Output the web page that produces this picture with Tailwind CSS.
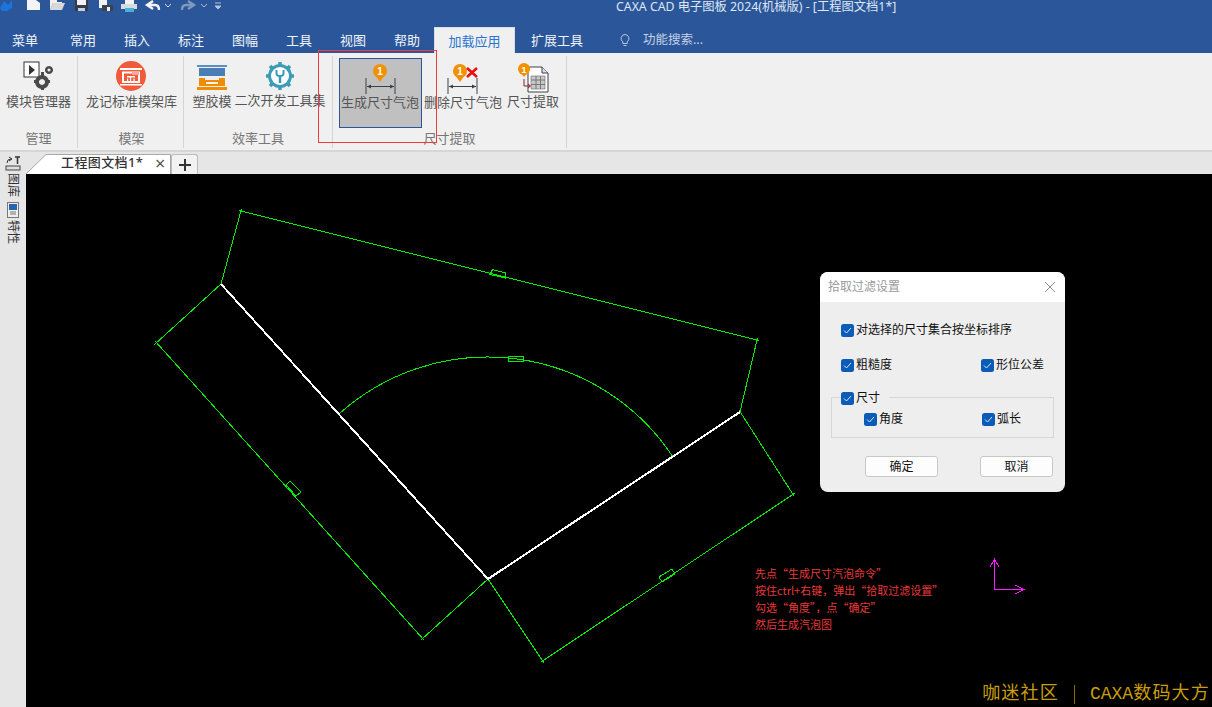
<!DOCTYPE html>
<html lang="zh">
<head>
<meta charset="utf-8">
<script src="https://cdn.jsdelivr.net/npm/@tailwindcss/browser@4"></script>
</head>
<body class="w-[1212px] h-[707px] overflow-hidden bg-black font-['Noto_Sans','Noto_Sans_CJK_SC',sans-serif] text-[13px]">
<div class="w-[1212px] h-[707px] flex flex-col relative">

  <!-- title bar -->
  <header class="h-[27px] bg-[#2b579a] relative flex items-start shrink-0">
    <div class="flex items-start h-[12px] overflow-hidden">
      <svg width="226" height="12" viewBox="0 0 226 12">
        <path d="M0 8 L4 1 L8 5 L12 0 L12 8 L7 11 L2 11Z" fill="#1c73d8"/>
        <path d="M27 0H36L40 3V10H27Z" fill="#f4f4f4"/>
        <path d="M50 10L53 3H65L62 10Z" fill="#d8d8d8"/><path d="M50 10V0H57V2H62V3H53L50 10Z" fill="#f0f0f0"/>
        <path d="M75 0H88V11H75Z" fill="#333c48"/><path d="M77 0H86V5H77Z" fill="#f2f2f2"/><path d="M78 8H85V11H78Z" fill="#ccd"/>
        <path d="M99 0H107V8H99Z" fill="#f2f2f2"/><path d="M102 5H113V11H102Z" fill="#39424e"/><path d="M107 7H110V11H107Z" fill="#eee"/>
        <path d="M125 0H134V4H125Z" fill="#f2f2f2"/><path d="M121 4H137V9H121Z" fill="#d7dbe0"/><path d="M125 8H134V12H125Z" fill="#4bb0d8"/>
        <path d="M153 1L147 5L153 9M147 5H155Q159 5 159 10" fill="none" stroke="#f4f4f4" stroke-width="2.4"/>
        <path d="M165 4L168 7L171 4" fill="none" stroke="#dde" stroke-width="1"/>
        <path d="M188 1L194 5L188 9M194 5H186Q182 5 182 10" fill="none" stroke="#7f98bd" stroke-width="2.4"/>
        <path d="M201 4L204 7L207 4" fill="none" stroke="#aabbd4" stroke-width="1"/>
        <path d="M215 3H221M215 6H221L218 9Z" fill="#b5c3d9" stroke="#b5c3d9" stroke-width="1"/>
      </svg>
    </div>
    <div class="absolute left-[616px] top-[-1px] text-[#dfe6f1] text-[12.3px] leading-[16px] whitespace-nowrap">CAXA CAD 电子图板 2024(机械版) - [工程图文档1*]</div>
  </header>

  <!-- tabs -->
  <nav class="h-[26px] bg-[#2b579a] flex items-center shrink-0 text-[#f1f4f9] pl-[12px] leading-[26px]">
    <span class="w-[58px]">菜单</span>
    <span class="w-[54px]">常用</span>
    <span class="w-[54px]">插入</span>
    <span class="w-[54px]">标注</span>
    <span class="w-[54px]">图幅</span>
    <span class="w-[54px]">工具</span>
    <span class="w-[54px]">视图</span>
    <span class="w-[40px]">帮助</span>
    <span class="w-[81px] h-[26px] bg-[#f0f0f0] text-[#2a74d2] text-center border-t border-x border-[#d9dee6]">加载应用</span>
    <span class="w-[103px] pl-[16px]">扩展工具</span>
    <svg width="14" height="14" viewBox="0 0 14 14" class="mr-[11px]" fill="none" stroke="#b8c7de" stroke-width="1"><path d="M7 1.5a4 4 0 0 0-2.2 7.3V10.500h4.400V8.800A4 4 0 0 0 7 1.500ZM5.500 12.500h3"/></svg>
    <span class="text-[#c5d1e4] text-[12.500px]">功能搜索...</span>
  </nav>

  <!-- ribbon -->
  <section class="h-[99px] bg-[#f0f0f0] border-b-2 border-[#d6d6d6] flex shrink-0 text-[#555] relative">
    <!-- group 1 -->
    <div class="w-[78px] h-[92px] mt-[3px] border-r border-[#d4d4d4] flex flex-col items-center">
      <div class="h-[71px] flex flex-col items-center">
        <svg width="30" height="30" viewBox="0 0 30 30" class="mt-[5px]">
          <rect x="1" y="1" width="15" height="15" fill="#fff" stroke="#333" stroke-width="1"/>
          <path d="M6 4L12 9L6 14Z" fill="#333"/>
          <g fill="#4a4a4a">
            <path d="M19 14a7 7 0 1 0 .01 0Zm0 4a3 3 0 1 1-.01 0Z"/>
            <path d="M18 11h3v4h-3zM18 25h3v4h-3zM11 19h4v3h-4zM23 19h4v3h-4z"/>
            <path d="M26 5a4 4 0 1 0 .01 0Zm0 2.500a1.500 1.500 0 1 1-.01 0Z"/>
          </g>
        </svg>
        <span class="mt-[1px] leading-[18px] whitespace-nowrap">模块管理器</span>
      </div>
      <span class="text-[#777] leading-[18px] mt-[2px]">管理</span>
    </div>
    <!-- group 2 -->
    <div class="w-[106px] h-[92px] mt-[3px] pl-[2px] border-r border-[#d4d4d4] flex flex-col items-center">
      <div class="h-[71px] flex flex-col items-center">
        <svg width="32" height="32" viewBox="0 0 32 32" class="mt-[4px]">
          <circle cx="16" cy="16" r="15" fill="#f25a3c"/>
          <path d="M5 8H27V10H5ZM7 11.500H25V13.500H7ZM7 13.500H9V23H7ZM23 13.500H25V23H23ZM9 21H23V23H9ZM5 24H27V25.500H5Z" fill="#fff"/>
          <path d="M12 16H20V17.500H12ZM15 17.500H16.200V21H15ZM12 18.500H13.200V21H12ZM18.500 18.500H19.700V21H18.500Z" fill="#fff"/>
          <path d="M17 12H24V15H17Z" fill="#f9a898"/>
        </svg>
        <span class="leading-[18px] whitespace-nowrap">龙记标准模架库</span>
      </div>
      <span class="text-[#777] leading-[18px] mt-[2px]">模架</span>
    </div>
    <!-- group 3 -->
    <div class="w-[149px] h-[92px] mt-[3px] border-r border-[#d4d4d4] flex flex-col items-center">
      <div class="h-[71px] flex items-start w-full pl-[7px]">
        <div class="flex flex-col items-center w-[42px]">
          <svg width="30" height="26" viewBox="0 0 30 26" class="mt-[9px]">
            <path d="M0 0H30V2H0Z" fill="#5b8fc2"/><path d="M2 3H28V11H2Z" fill="#4a7fb5"/>
            <path d="M2 13H28V21H2Z" fill="#f08c00"/><path d="M8 13H22V15H8ZM9 17H21V19H9Z" fill="#f0f0f0"/>
            <path d="M0 22H30V25H0Z" fill="#f08c00"/>
          </svg>
          <span class="leading-[18px] mt-[1px] whitespace-nowrap">塑胶模</span>
        </div>
        <div class="flex flex-col items-center w-[92px] ml-[1px]">
          <svg width="30" height="30" viewBox="0 0 30 30" class="mt-[5px]">
            <g stroke="#3d9bb5" stroke-width="3.500"><path d="M15 1V29M1 15H29M5 5L25 25M25 5L5 25"/></g>
            <circle cx="15" cy="15" r="12" fill="#3d9bb5"/>
            <circle cx="15" cy="15" r="9" fill="#fff"/>
            <path d="M11.500 9V12.500Q11.500 15 15 15Q18.500 15 18.500 12.500V9" fill="none" stroke="#3d9bb5" stroke-width="2"/>
            <path d="M13.700 14.500H16.300V22H13.700Z" fill="#3d9bb5"/>
          </svg>
          <span class="leading-[18px] whitespace-nowrap">二次开发工具集</span>
        </div>
      </div>
      <span class="text-[#777] leading-[18px] mt-[2px]">效率工具</span>
    </div>
    <!-- group 4 -->
    <div class="w-[234px] h-[92px] mt-[3px] border-r border-[#d4d4d4] flex flex-col items-center">
      <div class="h-[71px] flex items-start w-full pl-[6px] mt-[2px]">
        <div class="w-[83px] h-[70px] bg-[#c0c0c0] border border-[#2b579a] flex flex-col items-center">
          <svg width="32" height="32" viewBox="0 0 32 32" class="mt-[4px]">
            <circle cx="15" cy="8" r="7" fill="#f29100"/><path d="M10 12L15 19L20 12Z" fill="#f29100"/>
            <text x="15" y="11.500" text-anchor="middle" font-size="10" font-weight="700" fill="#fff" font-family="Liberation Sans">1</text>
            <path d="M1 15V31M30 15V31M2 23.500H29" stroke="#3a4048" stroke-width="1" fill="none"/>
            <path d="M2 23.500L6 21.500V25.500ZM29 23.500L25 21.500V25.500Z" fill="#3a4048"/>
          </svg>
          <span class="leading-[18px] whitespace-nowrap -mt-[2px] -ml-[1px]">生成尺寸气泡</span>
        </div>
        <div class="w-[82px] flex flex-col items-center">
          <svg width="32" height="32" viewBox="0 0 32 32" class="mt-[5px]">
            <circle cx="13" cy="8" r="7" fill="#f29100"/><path d="M8 12L13 19L18 12Z" fill="#f29100"/>
            <text x="13" y="11.500" text-anchor="middle" font-size="10" font-weight="700" fill="#fff" font-family="Liberation Sans">1</text>
            <path d="M20 5L30 14M30 5L20 14" stroke="#e81010" stroke-width="2.600"/>
            <path d="M1 15V31M30 15V31M2 23.500H29" stroke="#3a4048" stroke-width="1" fill="none"/>
            <path d="M2 23.500L6 21.500V25.500ZM29 23.500L25 21.500V25.500Z" fill="#3a4048"/>
          </svg>
          <span class="leading-[18px] whitespace-nowrap -mt-[2px]">删除尺寸气泡</span>
        </div>
        <div class="w-[58px] flex flex-col items-center">
          <svg width="32" height="32" viewBox="0 0 32 32" class="mt-[4px]">
            <path d="M11 5H25L31 11V30H11Z" fill="#fff" stroke="#3a4048"/><path d="M25 5V11H31" fill="#dde" stroke="#3a4048"/>
            <path d="M14 14H28V27H14Z" fill="#c8c8c8" stroke="#666" stroke-width=".6"/>
            <path d="M14 18H28M14 22.500H28M19 14V27M23.500 14V27" stroke="#666" stroke-width=".8"/>
            <circle cx="7" cy="7" r="6" fill="#f29100"/><path d="M3 10L7 15L11 10Z" fill="#f29100"/>
            <text x="7" y="10.500" text-anchor="middle" font-size="9" font-weight="700" fill="#fff" font-family="Liberation Sans">1</text>
            <path d="M7 17V24H13M11 22L13.500 24L11 26" fill="none" stroke="#8a1f1f" stroke-width="1"/>
          </svg>
          <span class="leading-[18px] whitespace-nowrap -mt-[2px]">尺寸提取</span>
        </div>
      </div>
      <span class="text-[#777] leading-[18px]">尺寸提取</span>
    </div>
    <div class="absolute left-[318px] top-[-3px] w-[119px] h-[93px] border border-[#f33b3b]"></div>
  </section>

  <!-- document area -->
  <div class="flex-1 flex bg-[#e6e6e6] min-h-0">
    <aside class="w-[26px] shrink-0 flex flex-col items-center pt-[4px] text-[#333] text-[12px] bg-[#e6e6e6]">
      <svg width="16" height="16" viewBox="0 0 16 16" class="mr-[1px]">
        <path d="M2 7Q2 3 6 3M4 1L7 3L4 5" fill="none" stroke="#333"/><path d="M10 1H15M12.500 1V8" stroke="#333" stroke-width="1.500"/>
        <rect x="1" y="10" width="14" height="4" fill="#ddd" stroke="#444"/>
      </svg>
      <span class="[writing-mode:vertical-rl] [text-orientation:sideways] leading-[14px] mt-[1px]">图库</span>
      <svg width="12" height="16" viewBox="0 0 12 16" class="mt-[5px]">
        <rect x=".5" y=".5" width="11" height="15" fill="#eee" stroke="#777"/><rect x="2" y="2" width="8" height="6" fill="#2a62ad"/><path d="M3 10H9M3 12H9" stroke="#777"/>
      </svg>
      <span class="[writing-mode:vertical-rl] [text-orientation:sideways] leading-[14px] mt-[2px]">特性</span>
    </aside>
    <div class="flex-1 flex flex-col min-w-0">
      <div class="h-[22px] flex items-end shrink-0 relative">
        <div class="w-[145px] h-[20px] flex items-center relative">
          <svg class="absolute inset-0" width="145" height="20" viewBox="0 0 145 20"><path d="M0 20L20 .500H144.500V20" fill="#fff" stroke="#a8a8a8"/></svg>
          <span class="ml-[35px] mb-[4px] font-medium text-[#333] leading-[20px] tracking-[0.4px] relative">工程图文档1*</span>
          <span class="absolute left-[129px] -top-[1px] text-[#555] text-[18px] leading-[20px]">×</span>
        </div>
        <div class="w-[27px] h-[20px] bg-[#f2f2f2] border-x border-t border-[#bbb] rounded-t-[3px] flex items-center justify-center">
          <svg width="14" height="14" viewBox="0 0 14 14"><path d="M7 1V13M1 7H13" stroke="#333" stroke-width="2"/></svg>
        </div>
      </div>

      <!-- canvas -->
      <main class="flex-1 bg-black relative overflow-hidden">
        <svg class="absolute inset-0" width="1186" height="533" viewBox="26 174 1186 533" fill="none">
          <g stroke="#00f000" stroke-width="1" shape-rendering="crispEdges">
            <path d="M239 210.500L759 340.500M757.500 338L739.500 414M739 410L794 496M795 493L541 662M544 663L488 579M488 579L421 640M424 640L155 341M154 345L221 284M221 284L241.500 209"/>
            <path d="M339 414A222 222 0 0 1 673 457"/>
            <path d="M492.500 269.500L506 273L505.500 278L490 274.500Z"/>
            <path d="M508.500 356.500H523.500V361.500H508.500Z"/>
            <path d="M290 481L301 492L296 496L286 485Z"/>
            <path d="M659 577L672 569L675 574L662 582Z"/>
          </g>
          <path d="M221 284L488 579L740 412" stroke="#fff" stroke-width="2" shape-rendering="crispEdges"/>
          <g stroke="#ff1cff" stroke-width="1" shape-rendering="crispEdges">
            <path d="M994.500 559V589.500H1024"/>
            <path d="M990 567L994.500 559L999 567M1015 585L1024 589.500L1015 594"/>
          </g>
        </svg>

        <div class="absolute left-[729px] top-[391px] text-[#e8383a] text-[11px] leading-[17px] whitespace-nowrap font-['Noto_Sans_CJK_SC',sans-serif]">
          <p>先点“生成尺寸汽泡命令”</p>
          <p>按住ctrl+右键，弹出“拾取过滤设置”</p>
          <p>勾选“角度”，点“确定”</p>
          <p>然后生成汽泡图</p>
        </div>

        <div class="absolute right-[2px] bottom-[1px] flex items-center text-[#c89e08] text-[18px] leading-[24px] whitespace-nowrap font-['Liberation_Mono','Noto_Sans_CJK_SC',monospace]">
          <span class="tracking-[1.2px]">咖迷社区</span>
          <span class="mx-[15px] w-px h-[19px] bg-[#8a6a10]"></span>
          <span>CAXA</span><span class="tracking-[1.2px]">数码大方</span>
        </div>

        <!-- dialog -->
        <div class="absolute left-[794px] top-[98px] w-[245px] h-[220px] bg-[#eeeeee] rounded-[8px] overflow-hidden text-[12px] text-[#111] leading-[16px]">
          <div class="h-[30px] bg-white flex items-center justify-between pl-[8px] pr-[9px] text-[#9a9a9a]">
            <span>拾取过滤设置</span>
            <svg width="12" height="12" viewBox="0 0 12 12" fill="none" stroke="#8c8c8c"><path d="M1 1L11 11M11 1L1 11"/></svg>
          </div>
          <div class="px-[21px] pt-[21px]">
            <label class="flex items-center gap-[2px] h-[14px]">
              <svg width="13" height="13" viewBox="0 0 13 13"><rect width="13" height="13" rx="2.500" fill="#0b5cb8"/><path d="M3 6.500L5.500 9L10 4" fill="none" stroke="#d8e6f6"/></svg>
              <span>对选择的尺寸集合按坐标排序</span>
            </label>
            <div class="flex mt-[21px] h-[14px]">
              <label class="flex items-center gap-[2px] w-[142px]">
                <svg width="13" height="13" viewBox="0 0 13 13"><rect width="13" height="13" rx="2.500" fill="#0b5cb8"/><path d="M3 6.500L5.500 9L10 4" fill="none" stroke="#d8e6f6"/></svg>
                <span>粗糙度</span>
              </label>
              <label class="flex items-center gap-[2px] whitespace-nowrap">
                <svg width="13" height="13" viewBox="0 0 13 13"><rect width="13" height="13" rx="2.500" fill="#0b5cb8"/><path d="M3 6.500L5.500 9L10 4" fill="none" stroke="#d8e6f6"/></svg>
                <span>形位公差</span>
              </label>
            </div>
          </div>
          <fieldset class="mx-[11px] mt-[25px] h-[41px] border border-[#d6d6d6] relative">
            <label class="absolute left-[9px] -top-[7px] w-[48px] pr-[4px] bg-[#eeeeee] flex items-center gap-[2px] h-[14px]">
              <svg width="13" height="13" viewBox="0 0 13 13"><rect width="13" height="13" rx="2.500" fill="#0b5cb8"/><path d="M3 6.500L5.500 9L10 4" fill="none" stroke="#d8e6f6"/></svg>
              <span>尺寸</span>
            </label>
            <div class="flex pl-[32px] pt-[14px] h-[14px]">
              <label class="flex items-center gap-[2px] w-[118px] h-[14px]">
                <svg width="13" height="13" viewBox="0 0 13 13"><rect width="13" height="13" rx="2.500" fill="#0b5cb8"/><path d="M3 6.500L5.500 9L10 4" fill="none" stroke="#d8e6f6"/></svg>
                <span>角度</span>
              </label>
              <label class="flex items-center gap-[2px] h-[14px]">
                <svg width="13" height="13" viewBox="0 0 13 13"><rect width="13" height="13" rx="2.500" fill="#0b5cb8"/><path d="M3 6.500L5.500 9L10 4" fill="none" stroke="#d8e6f6"/></svg>
                <span>弧长</span>
              </label>
            </div>
          </fieldset>
          <div class="flex pl-[45px] gap-[42px] mt-[18px]">
            <button class="w-[73px] h-[21px] bg-[#fdfdfd] border border-[#c8c8c8] rounded-[3px]">确定</button>
            <button class="w-[73px] h-[21px] bg-[#fdfdfd] border border-[#c8c8c8] rounded-[3px]">取消</button>
          </div>
        </div>
      </main>
    </div>
  </div>
</div>
</body>
</html>
